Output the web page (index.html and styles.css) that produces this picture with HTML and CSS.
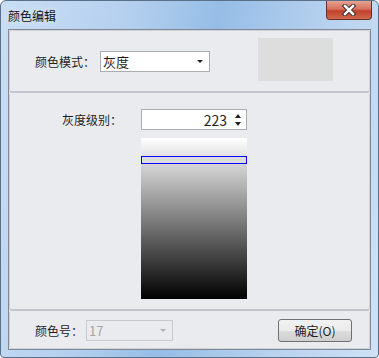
FILE: index.html
```html
<!DOCTYPE html>
<html lang="zh-CN">
<head>
    <meta charset="UTF-8">
    <title>颜色编辑</title>
    <link rel="stylesheet" href="styles.css">
</head>
<body>
    <div class="window">
        <div class="titlebar">
            <span class="title">颜色编辑</span>
            <div class="close">
                <svg width="18" height="12" viewBox="0 0 18 12">
                    <path d="M5 2 L13 10 M13 2 L5 10" stroke="#3a2a2a" stroke-width="4.5" stroke-linecap="square"/>
                    <path d="M5 2 L13 10 M13 2 L5 10" stroke="#fff" stroke-width="2.5" stroke-linecap="square"/>
                </svg>
            </div>
        </div>
        <div class="client">
            <div class="panel top">
                <span class="label">颜色模式：</span>
                <div class="combo mode">
                    <span>灰度</span>
                    <span class="arrow"></span>
                </div>
                <div class="preview"></div>
            </div>
            <div class="panel middle">
                <div class="row">
                    <span class="label right">灰度级别：</span>
                    <div class="spin">
                        <span class="value">223</span>
                        <div class="spin-btns">
                            <span class="up"></span>
                            <span class="down"></span>
                        </div>
                    </div>
                </div>
                <div class="ramp">
                    <div class="marker"></div>
                </div>
            </div>
            <div class="panel bottom">
                <span class="label">颜色号：</span>
                <div class="combo number">
                    <span>17</span>
                    <span class="arrow"></span>
                </div>
                <button class="ok">确定(O)</button>
            </div>
        </div>
    </div>
</body>
</html>
```

FILE: styles.css
```css
body, html {
    margin: 0;
    padding: 0;
    background: #fff;
    font-family: "Noto Sans CJK SC", "DejaVu Sans", sans-serif;
    font-size: 12px;
    color: #1e1e1e;
}
.window {
    width: 379px;
    height: 358px;
    box-sizing: border-box;
    border: 1px solid #5a6f88;
    border-radius: 6px 6px 4px 4px;
    background: linear-gradient(100deg, #c9def4 0%, #b4cfee 30%, #96bde6 50%, #b7d1ee 75%, #cfe2f6 100%);
    display: flex;
    flex-direction: column;
}
.titlebar {
    height: 28px;
    display: flex;
    align-items: flex-start;
    justify-content: space-between;
}
.title {
    margin: 6px 0 0 7px;
    font-size: 12px;
    color: #111;
    text-shadow: 0 0 6px #e6f0fb;
}
.close {
    width: 44px;
    height: 18px;
    margin-right: 6px;
    border: 1px solid #6b2e2a;
    border-top: none;
    border-radius: 0 0 4px 4px;
    background: linear-gradient(#e6a493 0%, #d7705c 45%, #c0402a 55%, #d06a50 100%);
    display: flex;
    align-items: center;
    justify-content: center;
}
.client {
    margin: 0 7px 7px 7px;
    flex: 1;
    background: #eaebef;
    border: 1px solid #7f8896;
    display: flex;
    flex-direction: column;
}
.panel {
    border: 1px solid #d2d3d8;
    border-radius: 3px;
    box-sizing: border-box;
    position: relative;
}
.panel.top {
    height: 63px;
    display: flex;
    align-items: center;
    padding-left: 25px;
    border-bottom: 2px solid #c3c5cc;
}
.label {
    white-space: nowrap;
}
.combo {
    height: 21px;
    box-sizing: border-box;
    background: #fff;
    border: 1px solid #abadb3;
    display: flex;
    align-items: center;
    justify-content: space-between;
    padding: 0 6px 0 2px;
}
.arrow {
    width: 0;
    height: 0;
    border-left: 3px solid transparent;
    border-right: 3px solid transparent;
    border-top: 3px solid #222;
}
.combo.mode {
    width: 110px;
    margin-left: 5px;
    font-size: 13px;
}
.preview {
    width: 75px;
    height: 43px;
    background: #dddddd;
    margin-left: 48px;
    margin-top: -3px;
}
.panel.middle {
    height: 218px;
    border-bottom: 2px solid #c3c5cc;
    border-top-color: #eaebef;
}
.row {
    display: flex;
    align-items: center;
    margin-top: 15px;
}
.label.right {
    width: 110px;
    text-align: right;
    margin-left: 2px;
    margin-right: 19px;
}
.spin {
    width: 106px;
    height: 21px;
    box-sizing: border-box;
    background: #fff;
    border: 1px solid #abadb3;
    display: flex;
    align-items: center;
    justify-content: flex-end;
    font-size: 14px;
}
.value {
    margin-right: 6px;
}
.spin-btns {
    width: 10px;
    height: 17px;
    display: flex;
    flex-direction: column;
    justify-content: center;
    align-items: center;
    gap: 4px;
    margin-right: 3px;
}
.spin-btns .up {
    border-left: 3px solid transparent;
    border-right: 3px solid transparent;
    border-bottom: 4px solid #222;
}
.spin-btns .down {
    border-left: 3px solid transparent;
    border-right: 3px solid transparent;
    border-top: 4px solid #222;
}
.ramp {
    width: 106px;
    height: 161px;
    margin: 8px 0 0 131px;
    background: linear-gradient(#ffffff, #000000);
    position: relative;
}
.marker {
    position: absolute;
    left: 0;
    top: 18px;
    width: 106px;
    height: 8px;
    box-sizing: border-box;
    border: 1px solid #0000ff;
    background: #dcdcdc;
}
.panel.bottom {
    flex: 1;
    display: flex;
    align-items: center;
    padding-left: 25px;
    border-top-color: #eaebef;
}
.combo.number {
    width: 87px;
    margin-left: 3px;
    border-color: #c8cacf;
    background: #eaebef;
    color: #a5a5a8;
    font-size: 13px;
}
.combo.number .arrow {
    border-top-color: #b0b0b4;
}
.ok {
    margin-left: 105px;
    width: 74px;
    height: 23px;
    font-family: "Noto Sans CJK SC", "DejaVu Sans", sans-serif;
    font-size: 12px;
    color: #1e1e1e;
    border: 1px solid #707070;
    border-radius: 3px;
    background: linear-gradient(#f2f2f2 0%, #ebebeb 50%, #dddddd 51%, #cfcfcf 100%);
    padding: 0;
}
```
